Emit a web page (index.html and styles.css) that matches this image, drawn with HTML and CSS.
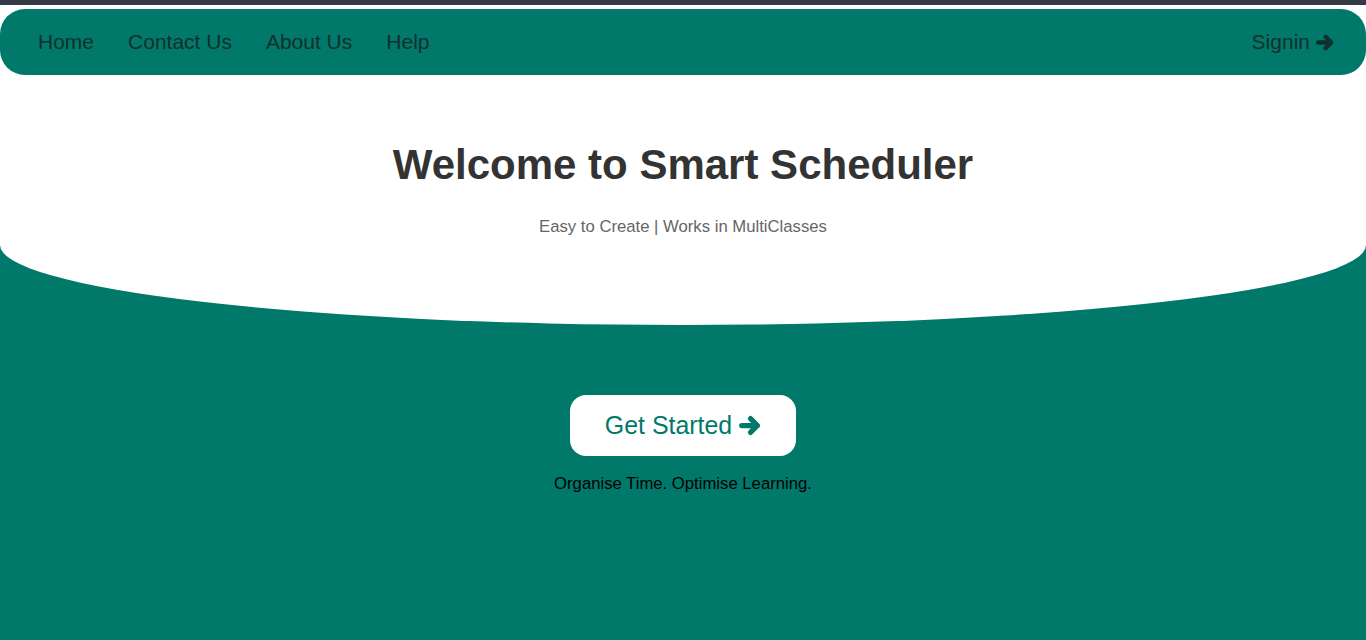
FILE: index.html
```html
<!DOCTYPE html>
<html lang="en">
<head>
<meta charset="utf-8">
<title>Smart Scheduler</title>
<link rel="stylesheet" href="styles.css">
</head>
<body>
<div class="topbar"></div>
<header class="hero">
  <nav class="nav">
    <ul class="nav-links">
      <li><a href="#">Home</a></li>
      <li><a href="#">Contact Us</a></li>
      <li><a href="#">About Us</a></li>
      <li><a href="#">Help</a></li>
    </ul>
    <a class="signin" href="#">Signin
      <svg class="arrow arrow-sm" viewBox="0 0 20 20" aria-hidden="true"><path d="M3 10H15.5M10 4.5L15.5 10L10 15.5"/></svg>
    </a>
  </nav>
  <h1 class="title">Welcome to Smart Scheduler</h1>
  <p class="subtitle">Easy to Create | Works in MultiClasses</p>
</header>
<main class="main">
  <a class="cta" href="#">Get Started
    <svg class="arrow arrow-lg" viewBox="0 0 20 20" aria-hidden="true"><path d="M3 10H15.5M10 4.5L15.5 10L10 15.5"/></svg>
  </a>
  <p class="tagline">Organise Time. Optimise Learning.</p>
</main>
</body>
</html>
```

FILE: styles.css
```css
html, body {
  margin: 0;
  padding: 0;
}
body {
  background: #00796b;
  font-family: "Liberation Sans", Arial, sans-serif;
  min-height: 640px;
}
.topbar {
  height: 5px;
  background: #343a46;
}
.hero {
  background: #ffffff;
  padding: 4px 0 88px;
  border-bottom-left-radius: 50% 80px;
  border-bottom-right-radius: 50% 80px;
  text-align: center;
}
.nav {
  height: 66px;
  background: #00796b;
  border-radius: 25px;
  display: flex;
  align-items: center;
  justify-content: space-between;
  padding: 0 30px 0 38px;
}
.nav-links {
  list-style: none;
  margin: 0;
  padding: 0;
  display: flex;
  gap: 34px;
}
.nav a {
  color: #11302c;
  text-decoration: none;
  font-size: 21px;
  line-height: 24px;
}
.signin {
  display: flex;
  align-items: center;
  gap: 5px;
}
.arrow {
  fill: none;
  stroke: currentColor;
  stroke-width: 4.2;
  stroke-linecap: round;
  stroke-linejoin: round;
  display: block;
}
.arrow-sm {
  width: 21px;
  height: 21px;
  color: #11302c;
}
.arrow-lg {
  width: 25px;
  height: 25px;
  color: #00796b;
}
.title {
  margin: 66px 0 0;
  font-size: 42px;
  line-height: 48px;
  font-weight: bold;
  color: #333333;
}
.subtitle {
  margin: 28px 0 0;
  font-size: 16.7px;
  line-height: 20px;
  color: #666666;
}
.main {
  display: flex;
  flex-direction: column;
  align-items: center;
  padding-top: 70px;
}
.cta {
  display: flex;
  align-items: center;
  gap: 6px;
  background: #ffffff;
  color: #00796b;
  text-decoration: none;
  font-size: 24.9px;
  line-height: 29px;
  padding: 16px 33px 16px 35px;
  border-radius: 16px;
}
.tagline {
  margin: 19px 0 0;
  font-size: 16.7px;
  line-height: 18px;
  color: #000000;
}
```
